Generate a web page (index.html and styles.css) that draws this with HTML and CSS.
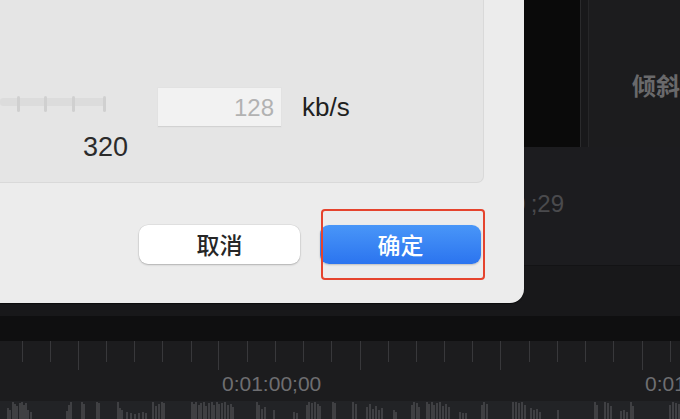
FILE: index.html
```html
<!DOCTYPE html>
<html lang="zh">
<head>
<meta charset="utf-8">
<title>导出设置</title>
<link rel="stylesheet" href="styles.css">
</head>
<body>
<div class="app">
  <div class="top">
    <div class="preview"></div>
    <div class="divider"></div>
    <div class="inspector"><span class="insp-label">倾斜</span></div>
  </div>
  <div class="timeline-head"><span class="timecode"><span class="tc-main">00:00:00</span><span class="tc-frames">;29</span></span></div>
  <div class="track-gap"></div>
  <div class="band"></div>
  <div class="ruler">
    <svg class="ruler-svg" width="680" height="60" viewBox="0 0 680 60">
      <g stroke="#38383b" stroke-width="1">
        <path d="M22.5 0V21M50.5 0V21M78.5 0V29M106.5 0V21M134.5 0V21M162.5 0V21M191.5 0V21M218.5 0V29M247.5 0V21M275.5 0V21M303.5 0V21M331.5 0V21M360.5 0V29M388.5 0V21M416.5 0V21M444.5 0V21M472.5 0V21M500.5 0V29M529.5 0V21M557.5 0V21M585.5 0V21M613.5 0V21M642.5 0V29M670.5 0V21"/>
      </g>
      <text class="ruler-label" x="222" y="50">0:01:00;00</text>
      <text class="ruler-label" x="645" y="50">0:01:30;00</text>
    </svg>
  </div>
  <div class="wave">
    <svg width="680" height="18" viewBox="0 0 680 18">
      <path stroke="#48484b" stroke-width="1.6" fill="none" d="M8 18V7M10 18V9M13 18V1M15 18V3M17 18V5M20 18V2M22 18V1M24 18V4M26 18V2M28 18V9M31 18V11M67 18V10M69 18V4M71 18V1M82 18V1M84 18V3M97 18V1M99 18V2M118 18V1M120 18V7M122 18V9M127 18V11M131 18V12M135 18V13M139 18V12M143 18V11M146 18V12M153 18V1M156 18V5M159 18V3M162 18V1M164 18V2M192 18V1M194 18V3M196 18V1M199 18V4M201 18V2M204 18V1M206 18V5M209 18V2M212 18V1M214 18V4M217 18V1M219 18V3M222 18V2M225 18V1M228 18V4M231 18V3M233 18V6M257 18V1M259 18V4M262 18V8M265 18V6M274 18V9M294 18V11M297 18V12M307 18V4M309 18V1M312 18V2M315 18V1M318 18V3M320 18V5M333 18V1M335 18V2M353 18V1M356 18V3M367 18V6M370 18V3M373 18V8M376 18V5M379 18V9M382 18V7M394 18V9M396 18V11M412 18V4M414 18V1M417 18V2M419 18V6M427 18V1M429 18V3M432 18V1M434 18V4M437 18V2M440 18V1M443 18V5M446 18V3M449 18V6M460 18V11M463 18V12M466 18V12M482 18V4M484 18V1M487 18V3M513 18V1M516 18V1M519 18V2M522 18V1M525 18V4M531 18V7M534 18V9M537 18V8M540 18V11M558 18V9M595 18V1M597 18V4M605 18V1M608 18V2M611 18V5M621 18V10M624 18V9M627 18V11M631 18V1M633 18V5M670 18V4M673 18V1M676 18V2M679 18V3"/>
    </svg>
  </div>
</div>

<div class="dialog">
  <div class="group">
    <div class="bitrate-row">
      <div class="slider">
        <svg class="slider-svg" width="130" height="26" viewBox="0 0 130 26">
          <rect x="0" y="10" width="106" height="8" rx="3" fill="#dcdcdc"/>
          <g fill="#d0d0d0">
            <rect x="17" y="8" width="3" height="16" rx="1.5"/>
            <rect x="44" y="8" width="3" height="16" rx="1.5"/>
            <rect x="72" y="8" width="3" height="16" rx="1.5"/>
            <rect x="103" y="8" width="3" height="16" rx="1.5"/>
          </g>
        </svg>
        <div class="slider-max">320</div>
      </div>
      <div class="field"><span class="field-value">128</span></div>
      <div class="unit">kb/s</div>
    </div>
  </div>
  <div class="actions">
    <button class="btn btn-cancel">取消</button>
    <button class="btn btn-ok">确定</button>
  </div>
</div>
<div class="highlight"></div>
</body>
</html>
```
FILE: styles.css
```css
html, body {
  margin: 0;
  padding: 0;
}
body {
  width: 680px;
  height: 419px;
  overflow: hidden;
  position: relative;
  background: #1b1b1d;
  font-family: "Liberation Sans", "Noto Sans CJK SC", sans-serif;
}
.app {
  display: flex;
  flex-direction: column;
  width: 680px;
  height: 419px;
}
.top {
  display: flex;
  height: 147px;
}
.preview {
  width: 580px;
  background: #0a0a0a;
  border-right: 1px solid #2a2a2c;
}
.divider {
  width: 7px;
  background: #18181a;
}
.inspector {
  flex: 1;
  background: #1c1c1e;
  border-left: 1px solid #262628;
  padding: 72px 0 0 43px;
  white-space: nowrap;
  overflow: hidden;
}
.insp-label {
  font-family: "Noto Sans CJK SC", sans-serif;
  font-weight: 700;
  font-size: 24px;
  line-height: 26px;
  color: #69696b;
}
.timeline-head {
  height: 73px;
  background: #1c1c1f;
  border-bottom: 1px solid #131315;
  padding: 45px 0 0 0;
  display: flex;
  justify-content: flex-end;
  padding-right: 116px;
}
.timecode {
  display: block;
  font-size: 24px;
  line-height: 24px;
  color: #4a4a4d;
  white-space: nowrap;
}
.tc-frames {
  margin-left: 5px;
}
.track-gap {
  height: 50px;
  background: #18181a;
}
.band {
  height: 25px;
  background: #0f0f10;
}
.ruler {
  height: 60px;
  background: #1c1c1e;
}
.ruler-svg {
  display: block;
}
.ruler-label {
  font-family: "Liberation Sans", sans-serif;
  font-size: 21px;
  fill: #6e6e71;
}
.wave {
  height: 18px;
  background: #222326;
}
.wave svg {
  display: block;
}

/* dialog overlay */
.dialog {
  position: absolute;
  left: 0;
  top: 0;
  width: 524px;
  height: 303px;
  box-sizing: border-box;
  background: #ececec;
  border-bottom-right-radius: 14px;
  box-shadow: 0 1px 1px rgba(0, 0, 0, 0.55);
  display: flex;
  flex-direction: column;
}
.group {
  width: 484px;
  height: 183px;
  box-sizing: border-box;
  background: #e5e5e5;
  border-right: 1px solid #d9d9d9;
  border-bottom: 1px solid #d9d9d9;
  border-bottom-right-radius: 7px;
  padding-top: 88px;
}
.bitrate-row {
  display: flex;
  align-items: flex-start;
}
.slider {
  width: 158px;
  display: flex;
  flex-direction: column;
}
.slider-svg {
  display: block;
}
.slider-max {
  margin: 17px 0 0 83px;
  font-size: 27px;
  line-height: 32px;
  color: #2b2b2b;
}
.field {
  width: 123px;
  height: 39px;
  box-sizing: border-box;
  background: #f2f2f2;
  border-bottom: 1px solid #d2d2d2;
  box-shadow: 0 0 0 0.5px #e0e0e0;
  display: flex;
  align-items: center;
  justify-content: flex-end;
  padding: 2px 7px 0 0;
}
.field-value {
  font-size: 24px;
  color: #b2b2b2;
}
.unit {
  margin-left: 21px;
  height: 39px;
  display: flex;
  align-items: center;
  font-size: 26px;
  color: #202020;
}
.actions {
  display: flex;
  justify-content: flex-end;
  gap: 20px;
  margin-top: 42px;
  padding-right: 43px;
}
.btn {
  width: 161px;
  height: 39px;
  border: none;
  border-radius: 9px;
  font-family: "Noto Sans CJK SC", sans-serif;
  font-weight: 500;
  font-size: 23px;
  line-height: 39px;
  padding: 0;
  margin: 0;
}
.btn-cancel {
  background: #ffffff;
  color: #262626;
  box-shadow: 0 1px 2px rgba(0, 0, 0, 0.22), 0 0 0 0.5px rgba(0, 0, 0, 0.08);
}
.btn-ok {
  background: linear-gradient(#4996f8, #2b74ef);
  color: #ffffff;
  box-shadow: 0 1px 2px rgba(0, 0, 0, 0.2);
}
.highlight {
  position: absolute;
  left: 321px;
  top: 209px;
  width: 164px;
  height: 71px;
  box-sizing: border-box;
  border: 2px solid #e5432d;
  border-radius: 4px;
}
```
